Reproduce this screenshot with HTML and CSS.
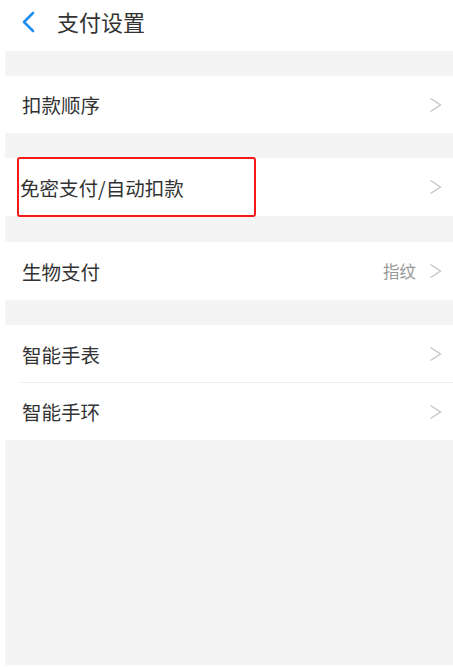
FILE: index.html
```html
<!DOCTYPE html>
<html lang="zh-CN">

<head>
    <meta charset="UTF-8">
    <meta name="viewport" content="width=device-width, initial-scale=1.0">
    <title>支付设置</title>
    <link rel="stylesheet" href="styles.css">
</head>

<body>
    <div class="page">
        <div class="header">
            <svg class="back" width="16" height="22" viewBox="0 0 16 22">
                <path d="M12 2 L3 11 L12 20" fill="none" stroke="#1e8ef0" stroke-width="2.6" stroke-linecap="round" stroke-linejoin="round"/>
            </svg>
            <h4 class="title">支付设置</h4>
        </div>

        <div class="gap"></div>
        <div class="item">
            <span class="label">扣款顺序</span>
            <svg class="arrow" width="13" height="16" viewBox="0 0 13 16"><path d="M1.5 1.5 L11.5 8 L1.5 14.5" /></svg>
        </div>

        <div class="gap"></div>
        <div class="item item-mark">
            <span class="label">免密支付/自动扣款</span>
            <svg class="arrow" width="13" height="16" viewBox="0 0 13 16"><path d="M1.5 1.5 L11.5 8 L1.5 14.5" /></svg>
            <div class="mark"></div>
        </div>

        <div class="gap gap-26"></div>
        <div class="item item-58">
            <span class="label">生物支付</span>
            <span class="value">指纹</span>
            <svg class="arrow" width="13" height="16" viewBox="0 0 13 16"><path d="M1.5 1.5 L11.5 8 L1.5 14.5" /></svg>
        </div>

        <div class="gap"></div>
        <div class="item line">
            <span class="label">智能手表</span>
            <svg class="arrow" width="13" height="16" viewBox="0 0 13 16"><path d="M1.5 1.5 L11.5 8 L1.5 14.5" /></svg>
        </div>
        <div class="item">
            <span class="label">智能手环</span>
            <svg class="arrow" width="13" height="16" viewBox="0 0 13 16"><path d="M1.5 1.5 L11.5 8 L1.5 14.5" /></svg>
        </div>

        <div class="bottom"></div>
    </div>
</body>

</html>
```

FILE: styles.css
```css
body {
    margin: 0;
    background-color: #fff;
    font-family: "Noto Sans CJK SC", "Noto Sans", sans-serif;
    color: #333;
}

h4 {
    margin: 0;
    padding: 0;
}

.page {
    margin-left: 5px;
    height: 667px;
    display: flex;
    flex-direction: column;
}

.header {
    height: 51px;
    flex-shrink: 0;
    display: flex;
    align-items: center;
    padding-left: 16px;
    background-color: #fff;
}

.header .back {
    margin-top: -8px;
}

.header .title {
    margin-left: 20px;
    margin-top: -10px;
    font-size: 22px;
    font-weight: normal;
    color: #333;
}

.gap {
    height: 25px;
    flex-shrink: 0;
    background-color: #f4f4f4;
}

.gap-26 {
    height: 26px;
}

.item {
    position: relative;
    height: 57px;
    flex-shrink: 0;
    display: flex;
    align-items: center;
    padding-left: 17px;
    padding-right: 11px;
    background-color: #fff;
}

.item-mark {
    height: 58px;
    padding-left: 15px;
}

.item-58 {
    height: 58px;
}

.item .label {
    flex: 1;
    font-size: 19.5px;
    color: #333;
}

.item .value {
    font-size: 16.5px;
    color: #999;
    margin-right: 13px;
}

.item .arrow path {
    fill: none;
    stroke: #c6c6c6;
    stroke-width: 1.4;
}

.line {
    height: 58px;
}

.line::after {
    content: "";
    position: absolute;
    left: 15px;
    right: 0;
    bottom: 0;
    height: 1px;
    background-color: #f0f0f0;
}

/* 红色标注框 */
.mark {
    position: absolute;
    left: 12px;
    top: -1px;
    width: 235px;
    height: 56px;
    border: 2px solid #f51a1a;
    border-radius: 3px;
}

.bottom {
    flex: 1;
    margin-bottom: 2px;
    background-color: #f4f4f4;
}
```
